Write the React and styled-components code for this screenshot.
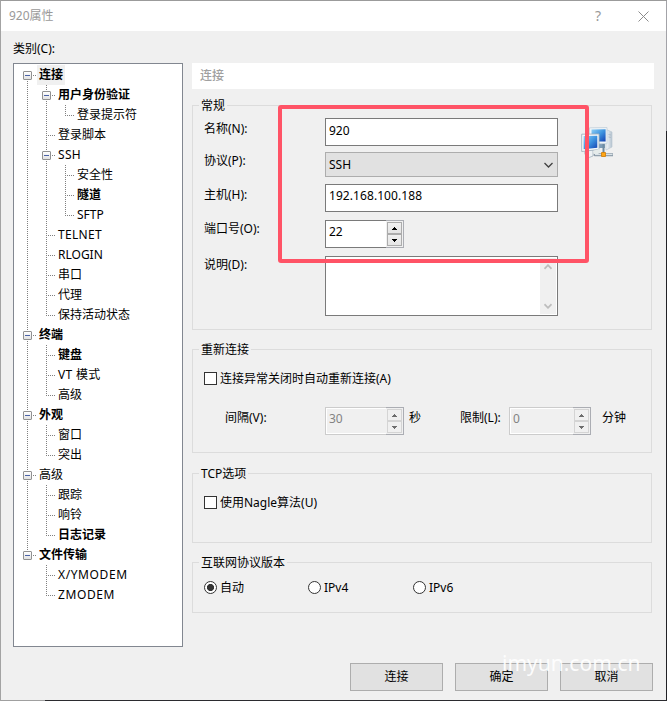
import React from "react";
import styled, { createGlobalStyle, css } from "styled-components";

const GlobalStyle = createGlobalStyle`
  * { box-sizing: border-box; }
  body { margin: 0; background: #f0f0f0; }
  body, button, input, textarea {
    font: 12px/16px "Noto Sans", "Noto Sans CJK SC", sans-serif;
    color: #000;
  }
`;

const Dialog = styled.div`
  position: relative;
  display: flex;
  flex-direction: column;
  width: 667px;
  height: 701px;
  overflow: hidden;
  background:
    linear-gradient(to right, #a0a0a0 44px, #2b2b2f 44px) 0 100% / 100% 1px no-repeat,
    linear-gradient(#a3a3a8 130px, #222226 130px) 100% 0 / 1px 100% no-repeat,
    #f0f0f0;
  border-left: 1px solid #a3a3a3;
  border-top: 1px solid #9b9b9b;
  white-space: nowrap;
`;

const TitleBar = styled.header`
  display: flex;
  align-items: center;
  height: 30px;
  margin-right: 1px;
  padding: 0 17px 0 8px;
  background: #fff;
  color: #999;
`;

const Title = styled.span`
  flex: 1;
`;

const HelpMark = styled.span`
  width: 12px;
  margin-right: 34px;
  text-align: center;
  font-size: 14px;
`;

const Body = styled.main`
  display: grid;
  grid-template-columns: 170px 462px;
  grid-template-rows: 22px 584px;
  column-gap: 9px;
  padding: 10px 12px 0;
`;

const Category = styled.label`
  grid-column: 1 / -1;
`;

const Tree = styled.div`
  border: 1px solid #828790;
  background: #fff;
  padding: 1px 0 0 4px;
`;

const TreeRow = styled.div`
  display: flex;
  height: 20px;
`;

const vDots = "repeating-linear-gradient(to bottom, #808080 0 1px, transparent 1px 2px)";
const hDots = "repeating-linear-gradient(to right, #808080 0 1px, transparent 1px 2px)";

const guides = {
  none: css``,
  through: css`background: ${vDots} 9px 0 / 1px 20px no-repeat;`,
  tee: css`background: ${vDots} 9px 0 / 1px 20px no-repeat, ${hDots} 9px 10px / 9px 1px no-repeat;`,
  last: css`background: ${vDots} 9px 0 / 1px 11px no-repeat, ${hDots} 9px 10px / 9px 1px no-repeat;`,
  first: css`background: ${vDots} 9px 10px / 1px 10px no-repeat, ${hDots} 9px 10px / 9px 1px no-repeat;`,
};

const Guide = styled.span`
  display: flex;
  align-items: center;
  justify-content: center;
  width: 19px;
  height: 20px;
  padding-top: 1px;
  ${(p) => guides[p.$kind]}
`;

const Toggle = styled.span`
  display: flex;
  align-items: center;
  justify-content: center;
  width: 9px;
  height: 9px;
  border: 1px solid #919191;
  border-radius: 1px;
  background: linear-gradient(#fff, #e2e2e2);
  box-shadow: 0 0 0 1px #fff;
  &::before {
    content: "";
    width: 5px;
    height: 1px;
    background: #4b63a7;
  }
`;

const NodeLabel = styled.span`
  height: 20px;
  padding: 0 2px;
  line-height: 20px;
  letter-spacing: ${(p) => p.$tracking || 0}px;
  font-weight: ${(p) => (p.$bold ? 700 : 400)};
  background: ${(p) => (p.$selected ? "#f0f0f0" : "transparent")};
`;

const Panel = styled.section`
  display: flex;
  flex-direction: column;
`;

const PanelHeader = styled.h1`
  height: 26px;
  margin: 0 0 8px;
  padding-left: 8px;
  background: #fff;
  color: #a0a0a0;
  font-size: 12px;
  font-weight: 500;
  line-height: 26px;
`;

const Group = styled.fieldset`
  width: 460px;
  height: ${(p) => p.$height}px;
  min-width: 0;
  margin: 0 0 ${(p) => p.$gap || 0}px;
  padding: 0 0 0 11px;
  border: 1px solid #dcdcdc;
`;

const Legend = styled.legend`
  height: 17px;
  margin-left: -5px;
  padding: 0 2px;
  line-height: 17px;
`;

const FormLayout = styled.div`
  display: flex;
  gap: 23px;
  padding-top: 4px;
`;

const Form = styled.div`
  width: 354px;
`;

const Field = styled.div`
  display: grid;
  grid-template-columns: 121px 233px;
  align-items: start;
  margin-bottom: ${(p) => p.$gap || 0}px;
`;

const FieldLabel = styled.label`
  padding-top: ${(p) => p.$drop || 1}px;
`;

const TextInput = styled.input`
  width: 233px;
  height: 28px;
  padding: 0 4px ${(p) => p.$lift || 4}px 3px;
  border: 1px solid #7a7a7a;
  background: #fff;
  outline: none;
`;

const Address = styled(TextInput)`
  letter-spacing: 0.07px;
`;

const Select = styled.div`
  display: flex;
  align-items: center;
  justify-content: space-between;
  height: 25px;
  padding: 0 4px 0 3px;
  border: 1px solid #adadad;
  background: #e1e1e1;
`;

const TextArea = styled.div`
  display: flex;
  justify-content: flex-end;
  height: 60px;
  padding: 1px;
  border: 1px solid #7a7a7a;
  background: #fff;
`;

const ScrollTrack = styled.div`
  display: flex;
  flex-direction: column;
  align-items: center;
  justify-content: space-between;
  width: 16px;
  padding: 6px 0 5px;
  background: #f0f0f0;
`;

const SpinBox = styled.div`
  display: flex;
  width: ${(p) => p.$width || 79}px;
  height: 28px;
  border: 1px solid ${(p) => (p.$disabled ? "#ccc" : "#7a7a7a")};
  border-right: 0;
  background: ${(p) => (p.$disabled ? "#f0f0f0" : "#fff")};
  color: ${(p) => (p.$disabled ? "#838383" : "#000")};
  box-shadow: ${(p) => (p.$disabled ? "inset 0 0 0 1px #fff" : "none")};
`;

const SpinValue = styled.span`
  flex: 1;
  padding: 3px 0 0 3px;
`;

const SpinButtons = styled.div`
  display: flex;
  flex-direction: column;
  width: 18px;
  height: 28px;
  margin-top: -1px;
  padding: 1px;
  border: 1px solid #abadb3;
  border-left: 0;
  background: #f0f0f0;
`;

const SpinButton = styled.button`
  display: flex;
  flex: 1;
  align-items: center;
  justify-content: center;
  padding: 0;
  border: 1px solid ${(p) => (p.$disabled ? "#d4d4d4" : "#acacac")};
  background: ${(p) => (p.$disabled ? "#f0f0f0" : "linear-gradient(#f0f0f0, #e5e5e5)")};
  color: ${(p) => (p.$disabled ? "#6d6d6d" : "#000")};
`;

const Option = styled.label`
  display: flex;
  align-items: center;
  gap: 3px;
  height: 17px;
  line-height: 17px;
`;

const CheckBox = styled.span`
  width: 13px;
  height: 13px;
  border: 1px solid #333;
  background: #fff;
`;

const Radio = styled.span`
  width: 13px;
  height: 13px;
  border: 1px solid #333;
  border-radius: 50%;
  background: ${(p) => (p.$checked ? "radial-gradient(circle, #333 3.2px, #fff 3.9px)" : "#fff")};
`;

const CheckRow = styled.div`
  padding-top: ${(p) => p.$top}px;
`;

const LimitRow = styled.div`
  display: grid;
  grid-template-columns: 100px 84px 51px 49px 93px auto;
  align-items: start;
  margin-top: 20px;
  padding-left: 21px;
`;

const LimitText = styled.span`
  padding-top: 3px;
`;

const RadioRow = styled.div`
  display: grid;
  grid-template-columns: 104px 105px auto;
  padding-top: 8px;
`;

const Actions = styled.footer`
  display: flex;
  justify-content: flex-end;
  gap: 12px;
  margin-top: 16px;
  padding-right: 14px;
`;

const ActionButton = styled.button`
  width: 93px;
  height: 28px;
  padding: 0;
  border: 1px solid #adadad;
  background: #e1e1e1;
`;

const Highlight = styled.div`
  position: absolute;
  left: 277px;
  top: 104px;
  width: 311px;
  height: 158px;
  border: 4px solid #ff5366;
  border-radius: 3px;
  pointer-events: none;
`;

const Watermark = styled.div`
  position: absolute;
  left: 501px;
  top: 647px;
  color: rgba(255, 255, 255, 0.92);
  font-size: 21px;
  line-height: 30px;
  pointer-events: none;
`;

const Arrow = ({ down }) => (
  <svg width="5" height="3" shapeRendering="crispEdges" fill="currentColor">
    <path d={down ? "M0 0h5v1h-1v1h-1v1h-1v-1h-1v-1h-1z" : "M2 0h1v1h1v1h1v1h-5v-1h1v-1h1z"} />
  </svg>
);

const Chevron = ({ up, width = 9, color = "#404040", weight = 1.3 }) => (
  <svg width={width} height="6" viewBox="0 0 9 6" fill="none" stroke={color} strokeWidth={weight}>
    <path d={up ? "M.5 5 4.5 1l4 4" : "M.5 1l4 4 4-4"} />
  </svg>
);

const CloseIcon = () => (
  <svg width="11" height="11" stroke="#8b8b8b" strokeWidth="1">
    <path d="M.5.5l10 10M10.5.5l-10 10" />
  </svg>
);

const SessionIcon = () => (
  <svg width="32" height="32" viewBox="0 0 32 32">
    <defs>
      <linearGradient id="screen" x1="0" y1="0" x2="1" y2="1">
        <stop offset="0" stopColor="#8fd0f5" />
        <stop offset=".5" stopColor="#3e94e0" />
        <stop offset="1" stopColor="#1440b0" />
      </linearGradient>
      <linearGradient id="tower" x1="0" y1="0" x2="1" y2="0">
        <stop offset="0" stopColor="#f7fafc" />
        <stop offset="1" stopColor="#b4c2cf" />
      </linearGradient>
    </defs>
    <path d="M25 2.5l6 2.5v15l-6 3z" fill="url(#tower)" stroke="#bcc8d3" strokeWidth=".7" />
    <path d="M27.5 7.5l2.5.5M27.5 10l2.5.4" stroke="#9aabba" strokeWidth=".6" />
    <path d="M18 16h6v5h-6z" fill="#7d9db8" />
    <path d="M14 27.8h17.5" stroke="#8b9ba8" strokeWidth="3" strokeLinecap="round" />
    <path d="M14 27.5h17.5" stroke="#dbe3e8" strokeWidth="1.2" />
    <path d="M8.5.8 26 .5v16.2H8.5z" fill="#eef4f8" stroke="#c3cfd9" strokeWidth=".8" />
    <path d="M10.5 2.6 24.6 2.2v12.4H10.5z" fill="url(#screen)" />
    <path d="M4 23h8v6q-4 3-7 0-2-2-1-6z" fill="#edf1f3" stroke="#a5b2bc" strokeWidth=".8" />
    <path d="M.7 7.2 18 7v15.5L.7 24.5z" fill="#f7fafc" stroke="#a3b2be" strokeWidth=".9" />
    <path d="M2.6 9 16.3 8.8v12L2.6 22.3z" fill="url(#screen)" />
    <path d="M12 24l6-2 2 2.5-3 2.5h-4z" fill="#e5ebea" />
    <path d="M21.5 17h2v9h-2z" fill="#6e8ba2" />
    <path d="M20.5 25.5h4v4h-4z" fill="#ffa514" stroke="#cf7b05" strokeWidth=".8" />
  </svg>
);

// Each node: guide cells from the left edge (uppercase means a toggle box), label, bold, tracking.
const kinds = { "-": "none", v: "through", t: "tee", l: "last", T: "tee", L: "last", F: "first" };
const nodes = [
  ["F", "连接", true],
  ["vT", "用户身份验证", true],
  ["vvl", "登录提示符"],
  ["vt", "登录脚本"],
  ["vT", "SSH", false, 0.3],
  ["vvt", "安全性"],
  ["vvt", "隧道", true],
  ["vvl", "SFTP"],
  ["vt", "TELNET", false, 0.3],
  ["vt", "RLOGIN"],
  ["vt", "串口"],
  ["vt", "代理"],
  ["vl", "保持活动状态"],
  ["T", "终端", true],
  ["vt", "键盘", true],
  ["vt", "VT 模式", false, 0.3],
  ["vl", "高级"],
  ["T", "外观", true],
  ["vt", "窗口"],
  ["vl", "突出"],
  ["T", "高级"],
  ["vt", "跟踪"],
  ["vt", "响铃"],
  ["vl", "日志记录", true],
  ["L", "文件传输", true],
  ["-t", "X/YMODEM", false, 0.6],
  ["-l", "ZMODEM", false, 0.6],
];

const Spinner = ({ value, width, disabled }) => (
  <SpinBox $width={width} $disabled={disabled}>
    <SpinValue>{value}</SpinValue>
    <SpinButtons>
      <SpinButton $disabled={disabled}><Arrow /></SpinButton>
      <SpinButton $disabled={disabled}><Arrow down /></SpinButton>
    </SpinButtons>
  </SpinBox>
);

export default function App() {
  return (
    <Dialog>
      <GlobalStyle />
      <TitleBar>
        <Title>920属性</Title>
        <HelpMark>?</HelpMark>
        <CloseIcon />
      </TitleBar>
      <Body>
        <Category>类别(C):</Category>
        <Tree>
          {nodes.map(([cells, label, bold, tracking], i) => (
            <TreeRow key={i}>
              {[...cells].map((c, k) => (
                <Guide key={k} $kind={kinds[c]}>{/[A-Z]/.test(c) && <Toggle />}</Guide>
              ))}
              <NodeLabel $bold={bold} $tracking={tracking} $selected={i === 0}>{label}</NodeLabel>
            </TreeRow>
          ))}
        </Tree>
        <Panel>
          <PanelHeader>连接</PanelHeader>
          <Group $height={233} $gap={11}>
            <Legend>常规</Legend>
            <FormLayout>
              <Form>
                <Field $gap={6}>
                  <FieldLabel $drop={3}>名称(N):</FieldLabel>
                  <TextInput $lift={4} defaultValue="920" />
                </Field>
                <Field $gap={7}>
                  <FieldLabel>协议(P):</FieldLabel>
                  <Select>SSH<Chevron /></Select>
                </Field>
                <Field $gap={8}>
                  <FieldLabel $drop={3}>主机(H):</FieldLabel>
                  <Address $lift={5} defaultValue="192.168.100.188" />
                </Field>
                <Field $gap={8}>
                  <FieldLabel>端口号(O):</FieldLabel>
                  <Spinner value="22" />
                </Field>
                <Field>
                  <FieldLabel>说明(D):</FieldLabel>
                  <TextArea>
                    <ScrollTrack>
                      <Chevron up width={8} color="#bdbdbd" weight={2} />
                      <Chevron width={8} color="#bdbdbd" weight={2} />
                    </ScrollTrack>
                  </TextArea>
                </Field>
              </Form>
              <CheckRow $top={9}><SessionIcon /></CheckRow>
            </FormLayout>
          </Group>
          <Group $height={112} $gap={12}>
            <Legend>重新连接</Legend>
            <CheckRow $top={12}>
              <Option><CheckBox />连接异常关闭时自动重新连接(A)</Option>
            </CheckRow>
            <LimitRow>
              <LimitText>间隔(V):</LimitText>
              <Spinner value="30" disabled />
              <LimitText>秒</LimitText>
              <LimitText>限制(L):</LimitText>
              <Spinner value="0" width={82} disabled />
              <LimitText>分钟</LimitText>
            </LimitRow>
          </Group>
          <Group $height={78} $gap={11}>
            <Legend>TCP选项</Legend>
            <CheckRow $top={12}>
              <Option><CheckBox />使用Nagle算法(U)</Option>
            </CheckRow>
          </Group>
          <Group $height={59}>
            <Legend>互联网协议版本</Legend>
            <RadioRow>
              <Option><Radio $checked />自动</Option>
              <Option><Radio />IPv4</Option>
              <Option><Radio />IPv6</Option>
            </RadioRow>
          </Group>
        </Panel>
      </Body>
      <Actions>
        <ActionButton>连接</ActionButton>
        <ActionButton>确定</ActionButton>
        <ActionButton>取消</ActionButton>
      </Actions>
      <Highlight />
      <Watermark>imyun.com.cn</Watermark>
    </Dialog>
  );
}
